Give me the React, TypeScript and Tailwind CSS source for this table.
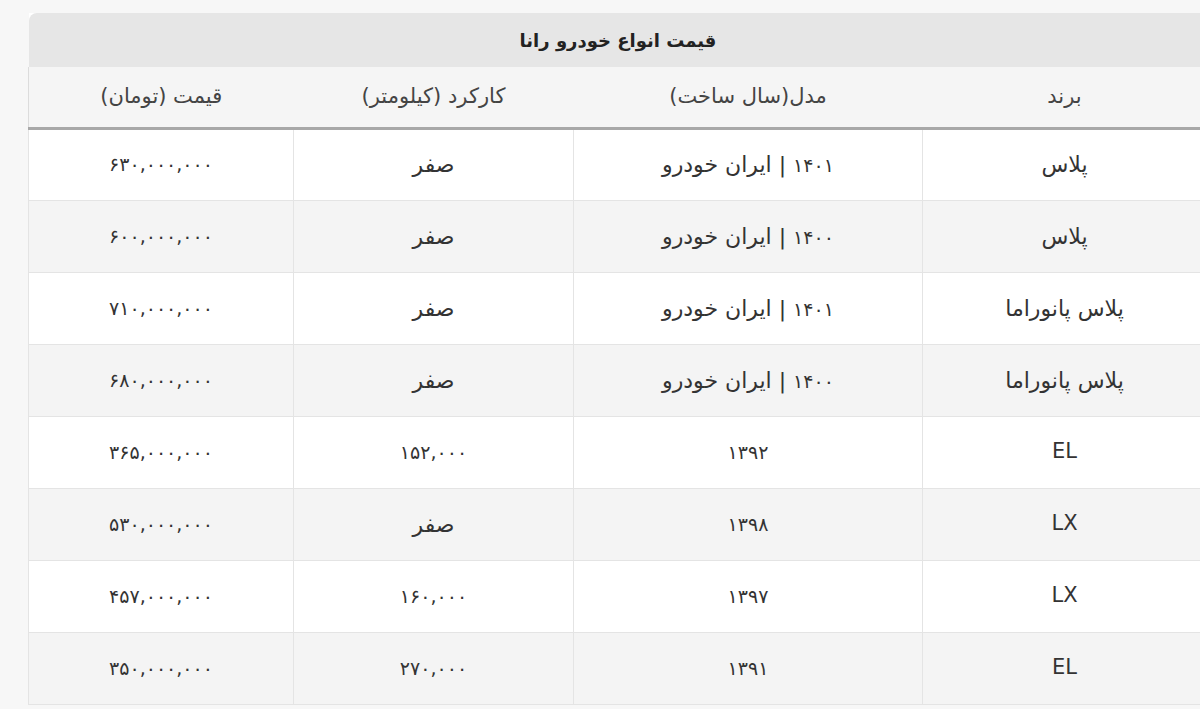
import React from 'react';

type Row = { brand: string; model: string; km: string; price: string };

const rows: Row[] = [
  { brand: 'پلاس', model: '۱۴۰۱ | ایران خودرو', km: 'صفر', price: '۶۳۰,۰۰۰,۰۰۰' },
  { brand: 'پلاس', model: '۱۴۰۰ | ایران خودرو', km: 'صفر', price: '۶۰۰,۰۰۰,۰۰۰' },
  { brand: 'پلاس پانوراما', model: '۱۴۰۱ | ایران خودرو', km: 'صفر', price: '۷۱۰,۰۰۰,۰۰۰' },
  { brand: 'پلاس پانوراما', model: '۱۴۰۰ | ایران خودرو', km: 'صفر', price: '۶۸۰,۰۰۰,۰۰۰' },
  { brand: 'EL', model: '۱۳۹۲', km: '۱۵۲,۰۰۰', price: '۳۶۵,۰۰۰,۰۰۰' },
  { brand: 'LX', model: '۱۳۹۸', km: 'صفر', price: '۵۳۰,۰۰۰,۰۰۰' },
  { brand: 'LX', model: '۱۳۹۷', km: '۱۶۰,۰۰۰', price: '۴۵۷,۰۰۰,۰۰۰' },
  { brand: 'EL', model: '۱۳۹۱', km: '۲۷۰,۰۰۰', price: '۳۵۰,۰۰۰,۰۰۰' },
];

const font = { fontFamily: '"DejaVu Sans", "Open Sans", sans-serif' };

// digits render wide in DejaVu, so numbers get a smaller size than words
function Cell({ text }: { text: string }) {
  const numeric = /^[۰-۹,]+$/.test(text);
  const latin = /^[A-Z]+$/.test(text);
  return (
    <td className="border border-[#e4e4e4] text-center">
      <span className={numeric ? 'text-[19px]' : latin ? 'text-[21px]' : 'text-[22px]'}>{text}</span>
    </td>
  );
}

function ModelCell({ text }: { text: string }) {
  const [year, maker] = text.split(' | ');
  return (
    <td className="border border-[#e4e4e4] text-center">
      <span className="text-[19px]">{year}</span>
      {maker && <span className="text-[22px]"> | {maker}</span>}
    </td>
  );
}

export default function App() {
  return (
    <div className="h-[709px] w-[1200px] overflow-hidden bg-[#f7f7f7] pl-[29px] pt-[13px]" style={font}>
      <div dir="rtl" className="w-[1178px] bg-white text-[#333]">
        <div className="flex h-[54px] items-center justify-center rounded-tl-lg rounded-tr-lg bg-[#e6e6e6] text-[18px] font-bold text-[#222]">
          قیمت انواع خودرو رانا
        </div>
        <table className="w-full table-fixed border-collapse border-l border-[#dcdcdc]">
          <colgroup>
            <col className="w-[284px]" />
            <col className="w-[349px]" />
            <col className="w-[280px]" />
            <col className="w-[265px]" />
          </colgroup>
          <thead>
            <tr className="h-[61px] border-b-[3px] border-[#a8a8a8] bg-[#f5f5f5] text-[21px] text-[#444]">
              <th className="font-normal">برند</th>
              <th className="font-normal">مدل(سال ساخت)</th>
              <th className="font-normal">کارکرد (کیلومتر)</th>
              <th className="font-normal">قیمت (تومان)</th>
            </tr>
          </thead>
          <tbody>
            {rows.map((r, i) => (
              <tr key={i} className={`h-[72px] ${i % 2 === 0 ? 'bg-white' : 'bg-[#f4f4f4]'}`}>
                <Cell text={r.brand} />
                <ModelCell text={r.model} />
                <Cell text={r.km} />
                <Cell text={r.price} />
              </tr>
            ))}
          </tbody>
        </table>
      </div>
    </div>
  );
}
